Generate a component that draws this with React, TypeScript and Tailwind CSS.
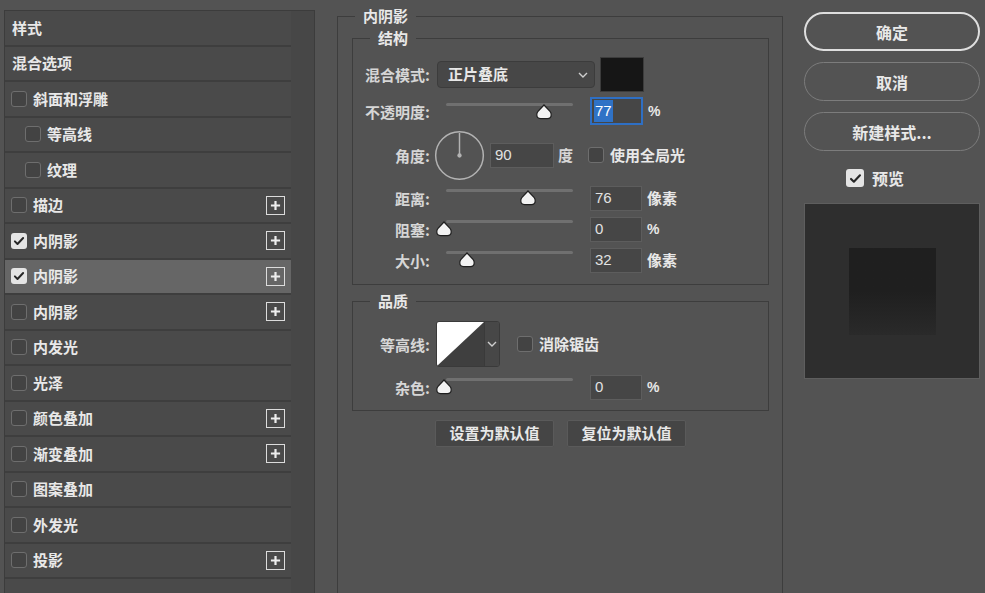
import React from "react";

const CJK = { fontFamily: '"Noto Sans CJK SC", "Noto Sans", sans-serif' };
const LIB = { fontFamily: '"Liberation Sans", Arial, sans-serif' };

function Box({ checked, big }: { checked?: boolean; big?: boolean }) {
  if (checked) {
    return (
      <span
        className={
          big
            ? "flex h-[18px] w-[18px] shrink-0 items-center justify-center rounded-[3px] bg-[#e4e4e4]"
            : "flex h-4 w-4 shrink-0 items-center justify-center rounded-[3px] bg-[#e4e4e4]"
        }
      >
        <svg viewBox="0 0 16 16" className={big ? "h-[13px] w-[13px]" : "h-3 w-3"}>
          <path d="M2.5 8.5l3.5 3.5 7.5-8" stroke="#262626" strokeWidth="2.6" fill="none" strokeLinecap="round" strokeLinejoin="round" />
        </svg>
      </span>
    );
  }
  return <span className="block h-4 w-4 shrink-0 rounded-[3px] border border-[#6e6e6e] bg-[#434343]" />;
}

function Plus() {
  return (
    <span className="flex h-[19px] w-[19px] items-center justify-center border-[1.5px] border-[#dcdcdc]">
      <svg viewBox="0 0 12 12" className="h-[11px] w-[11px]">
        <path d="M6 1v10M1 6h10" stroke="#ededed" strokeWidth="2.4" />
      </svg>
    </span>
  );
}

type Row = { label: string; header?: boolean; checked?: boolean; indent?: boolean; plus?: boolean; selected?: boolean };

const rows: Row[] = [
  { label: "样式", header: true },
  { label: "混合选项", header: true },
  { label: "斜面和浮雕" },
  { label: "等高线", indent: true },
  { label: "纹理", indent: true },
  { label: "描边", plus: true },
  { label: "内阴影", checked: true, plus: true },
  { label: "内阴影", checked: true, plus: true, selected: true },
  { label: "内阴影", plus: true },
  { label: "内发光" },
  { label: "光泽" },
  { label: "颜色叠加", plus: true },
  { label: "渐变叠加", plus: true },
  { label: "图案叠加" },
  { label: "外发光" },
  { label: "投影", plus: true },
];

const THUMB =
  "M8 1 L14 7.4 Q15.2 8.8 15.2 10.8 Q15.2 14.6 11.4 14.6 L4.6 14.6 Q0.8 14.6 0.8 10.8 Q0.8 8.8 2 7.4 Z";

function Thumb({ x, top }: { x: number; top: string }) {
  return (
    <svg viewBox="0 0 16 16" className={"absolute h-[16px] w-[16px] " + top} style={{ left: x - 8 }}>
      <path d={THUMB} fill="#f2f2f2" stroke="#1e1e1e" strokeWidth="1.2" />
    </svg>
  );
}

function Slider({ x }: { x: number }) {
  return (
    <div className="relative ml-[16px] h-full w-[127px]">
      <div className="absolute left-0 right-0 top-[3px] h-[3px] rounded-full bg-[#707070]" />
      <Thumb x={x} top="top-[4px]" />
    </div>
  );
}

function Num({ v }: { v: string }) {
  return (
    <div
      className="ml-[17px] flex h-full w-[52px] items-center border border-[#5d5d5d] bg-[#464646] pl-[4px] text-[15px] font-normal text-[#e2e2e2]"
      style={LIB}
    >
      {v}
    </div>
  );
}

function Label({ children }: { children: React.ReactNode }) {
  return <div className="w-[77px] shrink-0 text-right text-[15px] leading-none text-[#d6d6d6]">{children}</div>;
}

function Chevron() {
  return (
    <svg viewBox="0 0 10 6" className="h-[6px] w-[10px]">
      <path d="M1 1l4 4 4-4" stroke="#cfcfcf" strokeWidth="1.4" fill="none" />
    </svg>
  );
}

export default function App() {
  return (
    <div className="flex h-[593px] w-[985px] overflow-hidden bg-[#535353] font-semibold text-[#e8e8e8]" style={CJK}>
      {/* Left list */}
      <div className="w-[315px] shrink-0 pl-[4px] pt-[10px]">
        <div className="flex h-full border-l border-r border-t border-[#3c3c3c]">
          <div className="w-[286px] bg-[#4a4a4a]">
            {rows.map((r, i) => (
              <div
                key={i}
                className={
                  "flex h-[35.5px] items-center border-b-2 border-[#3e3e3e] pr-[6px] text-[15px] " +
                  (r.selected ? "bg-[#666666]" : "bg-[#4a4a4a]") +
                  (r.header ? " pl-[7px]" : r.indent ? " pl-[20px]" : " pl-[6px]")
                }
              >
                {!r.header && <Box checked={r.checked} />}
                <span className={r.header ? "" : "ml-[6px]"}>{r.label}</span>
                <span className="flex-1" />
                {r.plus && <Plus />}
              </div>
            ))}
          </div>
          <div className="flex-1 bg-[#474747]" />
        </div>
      </div>

      {/* Middle */}
      <div className="w-[468px] shrink-0 pl-[22px]">
        <fieldset className="mt-[6px] h-[620px] border border-[#3d3d3d] px-[14px] pr-[13px]">
          <legend className="ml-[3px] px-[8px] text-[15px] leading-[20px] text-[#e8e8e8]">内阴影</legend>

          <fieldset className="mt-[2px] border border-[#3d3d3d] pb-[11px]">
            <legend className="ml-[17px] px-[8px] text-[15px] leading-[20px]">结构</legend>
            {/* blend */}
            <div className="mt-[9px] flex h-[35px] items-center">
              <Label>混合模式:</Label>
              <div className="ml-[7px] flex h-[27px] w-[158px] items-center justify-between rounded-[4px] border border-[#3c3c3c] bg-[#474747] pl-[10px] pr-[6px] text-[15px]">
                <span>正片叠底</span>
                <Chevron />
              </div>
              <div className="ml-[5px] h-[35px] w-[44px] border border-[#3c3c3c] bg-[#161616]" />
            </div>
            {/* opacity */}
            <div className="mt-[5px] flex h-[28px] items-center">
              <Label>不透明度:</Label>
              <div className="relative ml-[16px] h-full w-[127px]">
                <div className="absolute left-0 right-0 top-[6px] h-[3px] rounded-full bg-[#707070]" />
                <Thumb x={98} top="top-[7px]" />
              </div>
              <div
                className="ml-[17px] flex h-full w-[53px] items-center border-2 border-[#2e6fc4] bg-[#464646] pl-[2px] text-[15px] font-normal text-white"
                style={LIB}
              >
                <span className="bg-[#2f72c6] px-[1px]">77</span>
              </div>
              <span className="ml-[5px] text-[14px]" style={LIB}>%</span>
            </div>
            {/* angle */}
            <div className="mt-[5px] flex h-[50px] items-center">
              <Label>角度:</Label>
              <svg viewBox="0 0 52 52" className="ml-[4px] h-[51px] w-[51px]">
                <circle cx="26" cy="26" r="24.3" stroke="#b3b3b3" strokeWidth="1.5" fill="none" />
                <path d="M26 26V3" stroke="#b3b3b3" strokeWidth="1.5" />
                <circle cx="26" cy="26" r="2.2" fill="#b3b3b3" />
              </svg>
              <div
                className="ml-[5px] flex h-[25px] w-[64px] items-center border border-[#5d5d5d] bg-[#464646] pl-[4px] text-[15px] font-normal text-[#e2e2e2]"
                style={LIB}
              >
                90
              </div>
              <span className="ml-[4px] text-[15px] text-[#d6d6d6]">度</span>
              <span className="ml-[15px] block"><Box /></span>
              <span className="ml-[6px] text-[15px]">使用全局光</span>
            </div>
            {[
              { l: "距离:", x: 82, v: "76", u: "像素" },
              { l: "阻塞:", x: -2, v: "0", u: "%" },
              { l: "大小:", x: 21, v: "32", u: "像素" },
            ].map((s, i) => (
              <div key={i} className="mt-[6px] flex h-[25px] items-center">
                <Label>{s.l}</Label>
                <Slider x={s.x} />
                <Num v={s.v} />
                <span
                  className="ml-[5px] text-[15px]"
                  style={s.u === "%" ? { ...LIB, fontSize: 14 } : undefined}
                >
                  {s.u}
                </span>
              </div>
            ))}
          </fieldset>

          <fieldset className="mt-[6px] border border-[#3d3d3d] pb-[10px]">
            <legend className="ml-[17px] px-[8px] text-[15px] leading-[20px]">品质</legend>
            <div className="mt-[10px] flex h-[46px] items-center">
              <Label>等高线:</Label>
              <div className="ml-[6px] flex h-[46px] w-[64px] overflow-hidden rounded-[3px] border border-[#3a3a3a]">
                <svg viewBox="0 0 47 46" preserveAspectRatio="none" className="h-full w-[47px]">
                  <rect width="47" height="46" fill="#3f3f3f" />
                  <path d="M0 0H47L0 46Z" fill="#ffffff" />
                </svg>
                <div className="flex flex-1 items-center justify-center border-l border-[#3a3a3a] bg-[#474747]">
                  <Chevron />
                </div>
              </div>
              <span className="ml-[17px] block"><Box /></span>
              <span className="ml-[6px] text-[15px]">消除锯齿</span>
            </div>
            <div className="mt-[8px] flex h-[25px] items-center">
              <Label>杂色:</Label>
              <Slider x={-2} />
              <Num v="0" />
              <span className="ml-[5px] text-[14px]" style={LIB}>%</span>
            </div>
          </fieldset>

          <div className="mt-[9px] flex justify-center gap-[13px]">
            <div className="flex h-[27px] w-[119px] items-center justify-center rounded-[2px] border border-[#5a5a5a] bg-[#454545] text-[15px]">
              设置为默认值
            </div>
            <div className="flex h-[27px] w-[119px] items-center justify-center rounded-[2px] border border-[#5a5a5a] bg-[#454545] text-[15px]">
              复位为默认值
            </div>
          </div>
        </fieldset>
      </div>

      {/* Right */}
      <div className="flex flex-1 flex-col pl-[21px] pt-[12px]">
        <div className="flex h-[39px] w-[176px] items-center justify-center rounded-full border-2 border-[#dedede] text-[16px]">确定</div>
        <div className="mt-[11px] flex h-[39px] w-[176px] items-center justify-center rounded-full border-[1.5px] border-[#7c7c7c] text-[16px]">取消</div>
        <div className="mt-[11px] flex h-[39px] w-[176px] items-center justify-center rounded-full border-[1.5px] border-[#7c7c7c] text-[16px]">新建样式...</div>
        <div className="ml-[42px] mt-[18px] flex h-[18px] items-center">
          <Box checked big />
          <span className="ml-[8px] text-[16px]">预览</span>
        </div>
        <div className="mt-[16px] flex h-[176px] w-[176px] items-center justify-center border border-[#5e5e5e] bg-[#2e2e2e]">
          <div className="h-[87px] w-[87px] bg-gradient-to-b from-[#1f1f1f] via-[#1f1f1f] to-[#2a2a2a]" />
        </div>
      </div>
    </div>
  );
}
